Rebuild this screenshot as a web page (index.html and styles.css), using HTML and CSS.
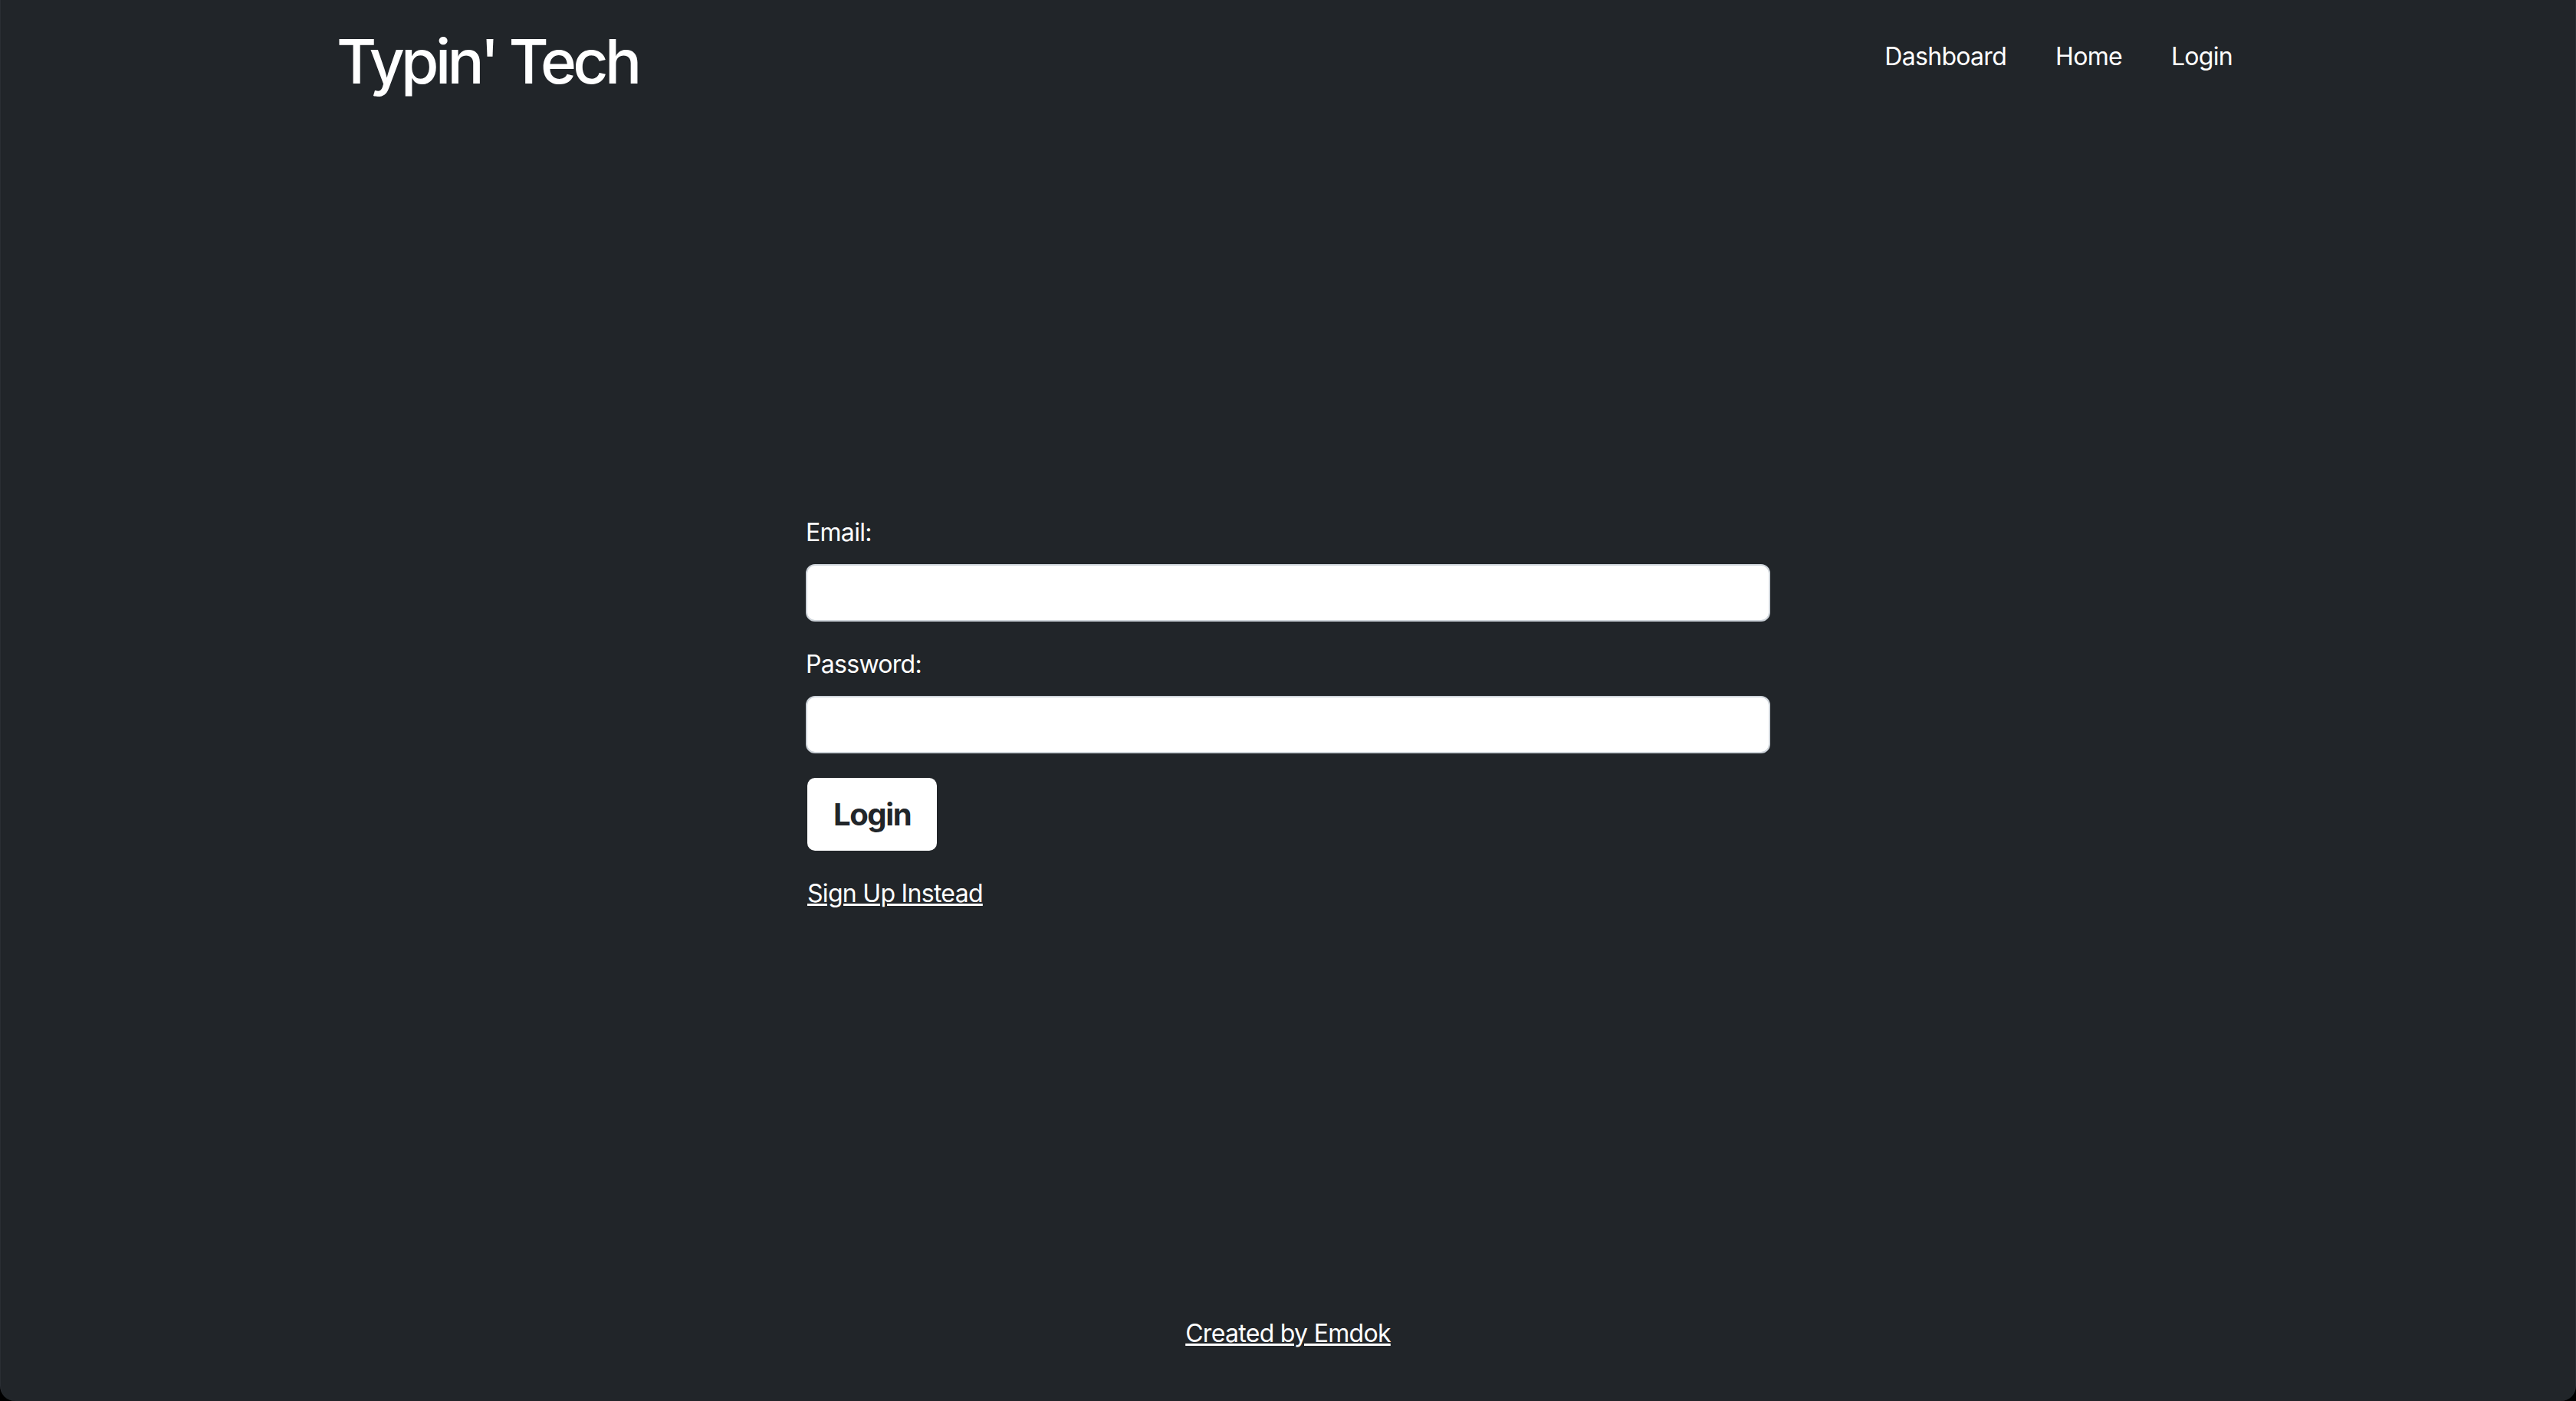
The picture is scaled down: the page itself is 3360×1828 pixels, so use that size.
FILE: index.html
```html
<!DOCTYPE html>
<html lang="en">
<head>
<meta charset="utf-8">
<title>Typin' Tech</title>
<link rel="stylesheet" href="styles.css">
</head>
<body>
<div class="page">
  <header class="site-header">
    <h1 class="brand">Typin' Tech</h1>
    <nav class="nav">
      <a class="nav-link" href="#">Dashboard</a>
      <a class="nav-link" href="#">Home</a>
      <a class="nav-link" href="#">Login</a>
    </nav>
  </header>
  <main class="main">
    <form class="login-form">
      <div class="field">
        <label class="form-label" for="email">Email:</label>
        <input class="form-control" id="email" type="email">
      </div>
      <div class="field">
        <label class="form-label" for="password">Password:</label>
        <input class="form-control" id="password" type="password">
      </div>
      <button class="btn" type="button">Login</button>
      <a class="switch-link" href="#">Sign Up Instead</a>
    </form>
  </main>
  <footer class="site-footer">
    <a class="footer-link" href="#">Created by Emdok</a>
  </footer>
</div>
</body>
</html>
```
FILE: styles.css
```css
html {
  background: #000;
  height: 100%;
}
body {
  margin: 0;
  height: 100%;
  font-family: Inter, "Liberation Sans", sans-serif;
  color: #fff;
  letter-spacing: -0.7px;
}
.page {
  box-sizing: border-box;
  height: 1828px;
  background: #212529;
  border-left: 1px solid #2a2e33;
  border-right: 1px solid #2a2e33;
  border-radius: 0 0 20px 20px;
  display: flex;
  flex-direction: column;
}
.site-header {
  display: flex;
  justify-content: space-between;
  align-items: flex-start;
  padding: 32px 415px 32px 438px;
}
.brand {
  margin: 0;
  font-size: 80px;
  font-weight: 500;
  line-height: 1.2;
  letter-spacing: -4.6px;
}
.nav {
  display: flex;
  margin-top: 2px;
}
.nav-link {
  color: #fff;
  text-decoration: none;
  font-size: 32px;
  line-height: 48px;
  padding: 16px 32px;
}
.main {
  flex: 1;
  display: flex;
  align-items: center;
  justify-content: center;
}
.login-form {
  width: 1258px;
  display: flex;
  flex-direction: column;
  align-items: flex-start;
  padding-top: 2px;
}
.field {
  width: 100%;
  margin-bottom: 32px;
}
.form-label {
  display: block;
  font-size: 32px;
  line-height: 48px;
  margin-bottom: 17px;
}
.form-control {
  display: block;
  box-sizing: border-box;
  width: 100%;
  height: 75px;
  border: 2px solid #ced4da;
  border-radius: 12px;
  background: #fff;
  font-size: 32px;
  padding: 0 24px;
  outline: none;
}
.btn {
  box-sizing: border-box;
  height: 95px;
  padding: 0 34px;
  border: 0;
  border-radius: 10px;
  background: #fff;
  color: #212529;
  font-family: Inter, "Liberation Sans", sans-serif;
  font-size: 40px;
  font-weight: 700;
  letter-spacing: -1.4px;
  margin-bottom: 32px;
  margin-left: 2px;
}
.switch-link {
  color: #fff;
  font-size: 32px;
  line-height: 48px;
  margin-left: 2px;
}
.site-footer {
  text-align: center;
  padding: 18px 0 64px;
}
.footer-link {
  color: #fff;
  font-size: 32px;
  line-height: 48px;
}
```
